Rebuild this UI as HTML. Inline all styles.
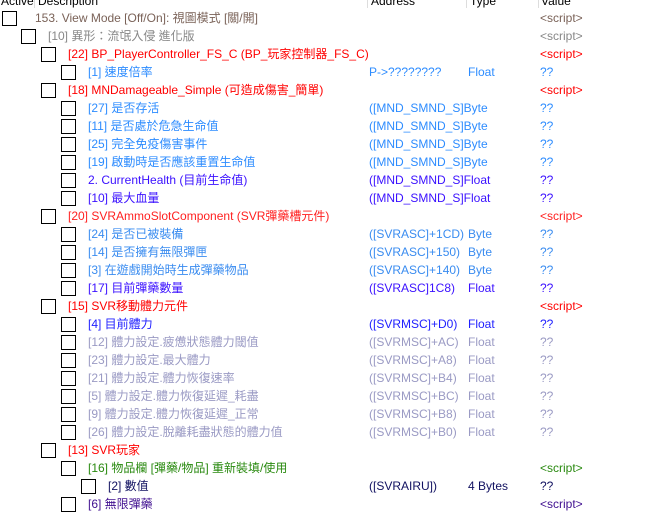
<!DOCTYPE html><html><head><meta charset="utf-8"><style>
body{margin:0;width:647px;height:515px;background:#fff;overflow:hidden;position:relative;font-family:"Liberation Sans","Noto Sans CJK TC",sans-serif;font-size:12px}
.h{position:absolute;top:-6px;height:14px;color:#000;font-size:12px}
.sep{position:absolute;top:0;width:1px;height:8px;background:#ddd}
.r{position:absolute;left:0;width:647px;height:18px;line-height:18px;white-space:nowrap}
.cb{position:absolute;top:2px;width:13px;height:13px;border:1px solid #000;background:#fff}
.t,.a,.y,.v{position:absolute;top:0}
.a{left:369px}.y{left:468px}.v{left:540px}
</style></head><body>
<div class="h" style="left:1px">Active</div><div class="sep" style="left:34px"></div><div class="h" style="left:38px">Description</div>
<div class="sep" style="left:367px"></div><div class="h" style="left:371px">Address</div>
<div class="sep" style="left:466px"></div><div class="h" style="left:470px">Type</div>
<div class="sep" style="left:538px"></div><div class="h" style="left:541px">Value</div>
<div id="rows"></div>
<script>
var R=[
[0,'153. View Mode [Off/On]: 視圖模式 [關/開]','#7a6258','','','<script>'],
[1,'[10] 異形：流氓入侵 進化版','#888','','','<script>'],
[2,'[22] BP_PlayerController_FS_C (BP_玩家控制器_FS_C)','#ff0000','','','<script>'],
[3,'[1] 速度倍率','#2d8cff','P->????????','Float','??'],
[2,'[18] MNDamageable_Simple (可造成傷害_簡單)','#ff0000','','','<script>'],
[3,'[27] 是否存活','#2d8cff','([MND_SMND_S]Byte','','??'],
[3,'[11] 是否處於危急生命值','#2d8cff','([MND_SMND_S]Byte','','??'],
[3,'[25] 完全免疫傷害事件','#2d8cff','([MND_SMND_S]Byte','','??'],
[3,'[19] 啟動時是否應該重置生命值','#2d8cff','([MND_SMND_S]Byte','','??'],
[3,'2.  CurrentHealth (目前生命值)','#3a10ff','([MND_SMND_S]Float','','??'],
[3,'[10] 最大血量','#3a10ff','([MND_SMND_S]Float','','??'],
[2,'[20] SVRAmmoSlotComponent (SVR彈藥槽元件)','#ff2020','','','<script>'],
[3,'[24] 是否已被裝備','#3a8cf0','([SVRASC]+1CD)','Byte','??'],
[3,'[14] 是否擁有無限彈匣','#3a8cf0','([SVRASC]+150)','Byte','??'],
[3,'[3] 在遊戲開始時生成彈藥物品','#3a8cf0','([SVRASC]+140)','Byte','??'],
[3,'[17] 目前彈藥數量','#3a10ff','([SVRASC]1C8)','Float','??'],
[2,'[15] SVR移動體力元件','#ff0000','','','<script>'],
[3,'[4] 目前體力','#2020ff','([SVRMSC]+D0)','Float','??'],
[3,'[12] 體力設定.疲憊狀態體力閾值','#9a9ac4','([SVRMSC]+AC)','Float','??'],
[3,'[23] 體力設定.最大體力','#9a9ac4','([SVRMSC]+A8)','Float','??'],
[3,'[21] 體力設定.體力恢復速率','#9a9ac4','([SVRMSC]+B4)','Float','??'],
[3,'[5] 體力設定.體力恢復延遲_耗盡','#9a9ac4','([SVRMSC]+BC)','Float','??'],
[3,'[9] 體力設定.體力恢復延遲_正常','#9a9ac4','([SVRMSC]+B8)','Float','??'],
[3,'[26] 體力設定.脫離耗盡狀態的體力值','#9a9ac4','([SVRMSC]+B0)','Float','??'],
[2,'[13] SVR玩家','#ff0000','','',''],
[3,'[16] 物品欄 [彈藥/物品] 重新裝填/使用','#2a8a10','','','<script>'],
[4,'[2] 數值','#101060','([SVRAIRU])','4 Bytes','??'],
[3,'[6] 無限彈藥','#401090','','','<script>']];
var h='';
function e(s){return s.replace(/&/g,'&amp;').replace(/</g,'&lt;').replace(/>/g,'&gt;');}
R.forEach(function(r,i){var l=r[0];var cx=l==0?2:1+l*20;var tx=l==0?35:l*20+28;
h+='<div class="r" style="top:'+(9+i*18)+'px;color:'+r[2]+'"><div class="cb" style="left:'+cx+'px"></div><span class="t" style="left:'+tx+'px">'+e(r[1])+'</span>';
if(r[3])h+='<span class="a">'+e(r[3])+'</span>';if(r[4])h+='<span class="y">'+e(r[4])+'</span>';if(r[5])h+='<span class="v">'+e(r[5])+'</span>';h+='</div>';});
document.getElementById('rows').innerHTML=h;
</script>
</body></html>
